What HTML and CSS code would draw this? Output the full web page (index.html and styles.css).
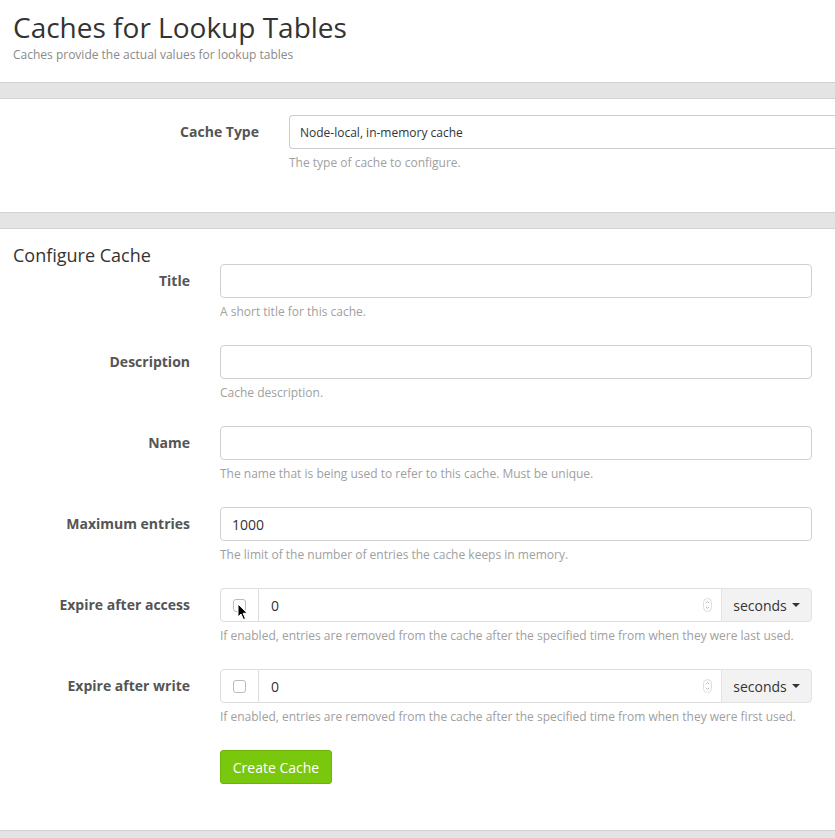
FILE: index.html
```html
<!DOCTYPE html>
<html lang="en">
<head>
<meta charset="utf-8">
<title>Caches for Lookup Tables</title>
<link rel="stylesheet" href="styles.css">
</head>
<body>
<header class="page-head">
  <h1 class="page-title">Caches for Lookup Tables</h1>
  <p class="page-sub">Caches provide the actual values for lookup tables</p>
</header>
<div class="band"></div>
<section class="panel panel-type">
  <div class="type-row">
    <label class="ctl-label">Cache Type</label>
    <div class="ctl">
      <div class="select-box">Node-local, in-memory cache</div>
      <p class="help">The type of cache to configure.</p>
    </div>
  </div>
</section>
<div class="band"></div>
<section class="panel panel-config">
  <h2 class="section-title">Configure Cache</h2>
  <div class="form-row">
    <label class="ctl-label">Title</label>
    <div class="ctl">
      <div class="text-input"></div>
      <p class="help">A short title for this cache.</p>
    </div>
  </div>
  <div class="form-row">
    <label class="ctl-label">Description</label>
    <div class="ctl">
      <div class="text-input"></div>
      <p class="help">Cache description.</p>
    </div>
  </div>
  <div class="form-row">
    <label class="ctl-label">Name</label>
    <div class="ctl">
      <div class="text-input"></div>
      <p class="help">The name that is being used to refer to this cache. Must be unique.</p>
    </div>
  </div>
  <div class="form-row">
    <label class="ctl-label">Maximum entries</label>
    <div class="ctl">
      <div class="text-input">1000</div>
      <p class="help">The limit of the number of entries the cache keeps in memory.</p>
    </div>
  </div>
  <div class="form-row">
    <label class="ctl-label">Expire after access</label>
    <div class="ctl">
      <div class="input-group">
        <span class="addon-check"><span class="checkbox"></span>
          <svg class="cursor" width="12" height="18" viewBox="0 0 12 18"><path d="M1 1 L1 14 L4 11 L6.5 16.5 L8.5 15.6 L6.1 10.3 L10.2 10.3 Z" fill="#000" stroke="#fff" stroke-width="1"/></svg>
        </span>
        <span class="num-input">0
          <svg class="spin" width="9" height="14" viewBox="0 0 9 14"><rect x="0.5" y="0.5" width="8" height="13" rx="4" fill="#fff" stroke="#ddd"/><path d="M2.8 5.2 L4.5 3.6 L6.2 5.2 M2.8 8.8 L4.5 10.4 L6.2 8.8" fill="none" stroke="#aaa" stroke-width="0.8"/></svg>
        </span>
        <span class="addon-unit">seconds <span class="caret"></span></span>
      </div>
      <p class="help">If enabled, entries are removed from the cache after the specified time from when they were last used.</p>
    </div>
  </div>
  <div class="form-row">
    <label class="ctl-label">Expire after write</label>
    <div class="ctl">
      <div class="input-group">
        <span class="addon-check"><span class="checkbox"></span></span>
        <span class="num-input">0
          <svg class="spin" width="9" height="14" viewBox="0 0 9 14"><rect x="0.5" y="0.5" width="8" height="13" rx="4" fill="#fff" stroke="#ddd"/><path d="M2.8 5.2 L4.5 3.6 L6.2 5.2 M2.8 8.8 L4.5 10.4 L6.2 8.8" fill="none" stroke="#aaa" stroke-width="0.8"/></svg>
        </span>
        <span class="addon-unit">seconds <span class="caret"></span></span>
      </div>
      <p class="help">If enabled, entries are removed from the cache after the specified time from when they were first used.</p>
    </div>
  </div>
  <div class="form-row form-actions">
    <span></span>
    <div class="ctl">
      <button class="btn-create" type="button">Create Cache</button>
    </div>
  </div>
</section>
<div class="band"></div>
</body>
</html>
```

FILE: styles.css
```css
* { box-sizing: border-box; }
html, body { margin: 0; padding: 0; }
body {
  font-family: "Open Sans", "Liberation Sans", sans-serif;
  font-size: 14px;
  color: #333;
  background: #fff;
  overflow: hidden;
  width: 835px;
}
.page-head {
  padding: 9px 13px 0;
  height: 82px;
}
.page-title {
  margin: 0;
  font-size: 28px;
  font-weight: 400;
  line-height: 36px;
  color: #333;
}
.page-sub {
  margin: 1px 0 0;
  font-size: 12px;
  line-height: 17px;
  color: #8a8a8a;
}
.band {
  height: 17px;
  background: #e4e4e4;
  border-top: 1px solid #d2d2d2;
  border-bottom: 1px solid #d2d2d2;
}
.panel {
  background: #fff;
}
.panel-type {
  padding: 16px 0 41px;
}
.type-row {
  display: grid;
  grid-template-columns: 259px 546px;
  column-gap: 30px;
}
.ctl-label {
  display: flex;
  align-items: center;
  justify-content: flex-end;
  height: 34px;
  padding-bottom: 2px;
  font-weight: 700;
  font-size: 14px;
  color: #555;
}
.select-box {
  height: 34px;
  border: 1px solid #ccc;
  border-right: none;
  border-radius: 4px 0 0 4px;
  padding: 0 10px;
  display: flex;
  align-items: center;
  font-size: 12px;
  color: #333;
}
.help {
  margin: 5px 0 10px;
  font-size: 12px;
  line-height: 17px;
  color: #a0a0a0;
}
.panel-type .help { margin-bottom: 0; }
.panel-config {
  padding: 16px 0 46px;
}
.section-title {
  margin: 0 0 -1px 13px;
  font-size: 18px;
  font-weight: 400;
  line-height: 20px;
  color: #333;
}
.form-row {
  display: grid;
  grid-template-columns: 190px 592px;
  column-gap: 30px;
  margin-bottom: 15px;
}
.form-actions { margin-bottom: 0; margin-top: 1px; }
.text-input {
  height: 34px;
  border: 1px solid #d0d0d0;
  border-radius: 4px;
  padding: 0 11px;
  display: flex;
  align-items: center;
  font-size: 14px;
  color: #333;
}
.input-group {
  display: flex;
  height: 34px;
}
.addon-check {
  position: relative;
  width: 39px;
  flex: none;
  border: 1px solid #ddd;
  border-radius: 4px 0 0 4px;
  display: flex;
  align-items: center;
  justify-content: center;
  background: #fff;
}
.checkbox {
  width: 13px;
  height: 13px;
  border: 1px solid #bbb;
  border-radius: 3px;
  background: #fff;
}
.cursor {
  position: absolute;
  left: 16px;
  top: 14px;
}
.num-input {
  flex: 1;
  border-top: 1px solid #ddd;
  border-bottom: 1px solid #ddd;
  display: flex;
  align-items: center;
  justify-content: space-between;
  padding: 0 9px 0 12px;
  font-size: 14px;
  color: #333;
}
.addon-unit {
  width: 91px;
  flex: none;
  background: #f2f2f2;
  border: 1px solid #e2e2e2;
  border-radius: 0 4px 4px 0;
  display: flex;
  align-items: center;
  justify-content: center;
  gap: 5px;
  font-size: 14px;
  color: #333;
}
.caret {
  width: 0;
  height: 0;
  border-left: 4px solid transparent;
  border-right: 4px solid transparent;
  border-top: 4px solid #333;
}
.btn-create {
  height: 34px;
  width: 112px;
  border: 1px solid #6db40a;
  border-radius: 3px;
  background: #79c80d;
  color: #fff;
  font-family: "Open Sans", "Liberation Sans", sans-serif;
  font-size: 14px;
  padding: 0;
  cursor: pointer;
}
```
